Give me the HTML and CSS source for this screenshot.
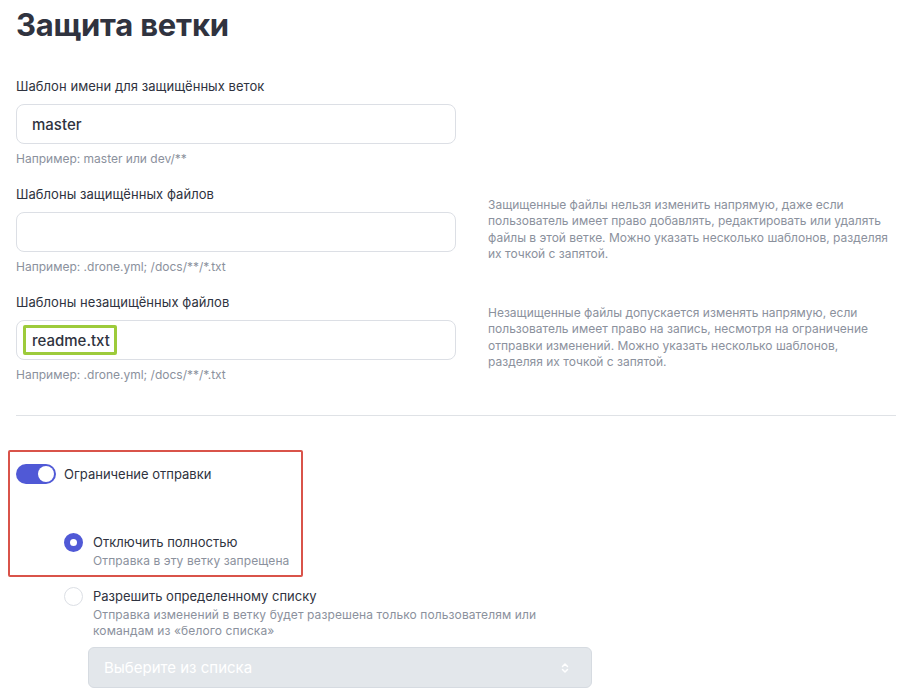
FILE: index.html
```html
<!DOCTYPE html>
<html lang="ru">
<head>
<meta charset="utf-8">
<title>Защита ветки</title>
<link rel="stylesheet" href="styles.css">
</head>
<body>
<main class="page">
  <h1 class="title">Защита ветки</h1>

  <div class="rows">
    <div class="row">
      <div class="field">
        <div class="label">Шаблон имени для защищённых веток</div>
        <div class="input"><span class="value">master</span></div>
        <div class="hint">Например: master или dev/**</div>
      </div>
      <div class="note"></div>
    </div>

    <div class="row">
      <div class="field">
        <div class="label">Шаблоны защищённых файлов</div>
        <div class="input"></div>
        <div class="hint">Например: .drone.yml; /docs/**/*.txt</div>
      </div>
      <p class="note">Защищенные файлы нельзя изменить напрямую, даже если пользователь имеет право добавлять, редактировать или удалять файлы в этой ветке. Можно указать несколько шаблонов, разделяя их точкой с запятой.</p>
    </div>

    <div class="row">
      <div class="field">
        <div class="label">Шаблоны незащищённых файлов</div>
        <div class="input input-marked"><span class="value">readme.txt</span><span class="mark-green"></span></div>
        <div class="hint">Например: .drone.yml; /docs/**/*.txt</div>
      </div>
      <p class="note">Незащищенные файлы допускается изменять напрямую, если пользователь имеет право на запись, несмотря на ограничение отправки изменений. Можно указать несколько шаблонов, разделяя их точкой с запятой.</p>
    </div>
  </div>

  <div class="divider"></div>

  <section class="push">
    <span class="mark-red"></span>
    <div class="toggle-row">
      <span class="toggle"><span class="knob"></span></span>
      <span class="toggle-label">Ограничение отправки</span>
    </div>

    <div class="options">
      <div class="option">
        <span class="radio radio-on"></span>
        <div class="option-body">
          <div class="option-title">Отключить полностью</div>
          <div class="option-desc">Отправка в эту ветку запрещена</div>
        </div>
      </div>
      <div class="option">
        <span class="radio"></span>
        <div class="option-body">
          <div class="option-title">Разрешить определенному списку</div>
          <div class="option-desc">Отправка изменений в ветку будет разрешена только пользователям или<br>командам из «белого списка»</div>
        </div>
      </div>
      <div class="select">
        <span class="select-text">Выберите из списка</span>
        <svg class="chev" width="8" height="12" viewBox="0 0 8 12" aria-hidden="true"><path d="M1.5 4.5 L4 2 L6.5 4.5 M1.5 7.5 L4 10 L6.5 7.5" fill="none" stroke="#ffffff" stroke-width="1.5" stroke-linecap="round" stroke-linejoin="round"/></svg>
      </div>
    </div>
  </section>
</main>
</body>
</html>
```

FILE: styles.css
```css
* { box-sizing: border-box; }
html, body { margin: 0; padding: 0; background: #ffffff; }
body {
  font-family: Inter, "Noto Sans", "Liberation Sans", sans-serif;
  color: #2f3340;
}
.page {
  padding: 5px 9px 0 16px;
}
.title {
  margin: 0;
  font-size: 31px;
  line-height: 40px;
  font-weight: 700;
  color: #30333f;
  letter-spacing: -0.2px;
}
.rows {
  margin-top: 31px;
  display: flex;
  flex-direction: column;
  gap: 17px;
}
.row {
  display: grid;
  grid-template-columns: 440px 1fr;
  column-gap: 32px;
}
.field { display: flex; flex-direction: column; }
.label {
  font-size: 13px;
  line-height: 20px;
  color: #2f3340;
  letter-spacing: 0.05px;
}
.input {
  margin-top: 8px;
  height: 40px;
  border: 1px solid #dcdfe5;
  border-radius: 8px;
  padding: 0 15px;
  display: flex;
  align-items: center;
  position: relative;
}
.value {
  font-size: 15px;
  font-weight: 500;
  color: #2f3340;
}
.hint {
  margin-top: 7px;
  font-size: 12px;
  line-height: 16px;
  color: #8b919d;
}
.note {
  margin: 0;
  padding-top: 13px;
  font-size: 12px;
  line-height: 16.3px;
  color: #8b919d;
}
.mark-green {
  position: absolute;
  left: 6px;
  top: 4px;
  width: 94px;
  height: 30px;
  border: 3px solid #9dcb3b;
  border-radius: 2px;
}
.divider {
  margin-top: 32px;
  height: 1px;
  background: #dfe2e6;
}
.push {
  position: relative;
  margin-top: 48px;
  padding-bottom: 20px;
}
.mark-red {
  position: absolute;
  left: -8px;
  top: -14px;
  width: 295px;
  height: 127px;
  border: 2px solid #d9534a;
  border-radius: 2px;
}
.toggle-row {
  display: flex;
  align-items: center;
  gap: 8px;
  height: 20px;
}
.toggle {
  width: 40px;
  height: 20px;
  border-radius: 10px;
  background: #5059d6;
  display: flex;
  justify-content: flex-end;
  align-items: center;
  padding: 0 2px;
}
.knob {
  width: 16px;
  height: 16px;
  border-radius: 50%;
  background: #ffffff;
}
.toggle-label {
  font-size: 13px;
  line-height: 20px;
  color: #2f3340;
}
.options {
  margin-top: 48px;
  padding-left: 48px;
  display: flex;
  flex-direction: column;
}
.option {
  display: flex;
  gap: 10px;
  align-items: flex-start;
}
.option + .option { margin-top: 17px; }
.radio {
  flex: none;
  width: 19px;
  height: 19px;
  margin-top: 1px;
  border-radius: 50%;
  border: 1px solid #dcdfe5;
  background: #ffffff;
}
.radio-on {
  border: 6.5px solid #5059d6;
}
.option-title {
  font-size: 13px;
  line-height: 20px;
  color: #2f3340;
}
.option-desc {
  margin-top: 1px;
  font-size: 12px;
  line-height: 16px;
  color: #8b919d;
  letter-spacing: 0.1px;
}
.select {
  margin-top: 8px;
  margin-left: 24px;
  width: 504px;
  height: 41px;
  background: #e3e7eb;
  border: 1px solid #d6dbe1;
  border-radius: 6px;
  display: flex;
  align-items: center;
  justify-content: space-between;
  padding: 0 22px 0 15px;
}
.select-text {
  font-size: 15px;
  color: #ffffff;
}
.chev { display: block; }
```
